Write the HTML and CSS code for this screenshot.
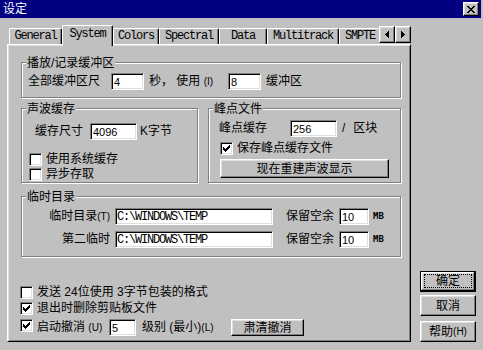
FILE: index.html
```html
<!DOCTYPE html>
<html lang="zh-CN">
<head>
<meta charset="utf-8">
<title>设定</title>
<link rel="stylesheet" href="styles.css">
</head>
<body>
<div class="window">
  <div class="titlebar">
    <span class="title">设定</span>
    <span class="close-btn"><svg width="8" height="7" viewBox="0 0 8 7"><path fill="#000" d="M0 0h2v1H0zM6 0h2v1H6zM1 1h2v1H1zM5 1h2v1H5zM2 2h4v1H2zM3 3h2v1H3zM2 4h4v1H2zM1 5h2v1H1zM5 5h2v1H5zM0 6h2v1H0zM6 6h2v1H6z"/></svg></span>
  </div>
  <div class="client">
    <div class="tabctl">
      <div class="tabstrip">
        <div class="tab w-general">General</div>
        <div class="tab active w-system">System</div>
        <div class="tab w-colors">Colors</div>
        <div class="tab w-spectral">Spectral</div>
        <div class="tab w-data">Data</div>
        <div class="tab w-multi">Multitrack</div>
        <div class="tab w-smpte">SMPTE</div>
        <div class="scroll-btn"><svg width="4" height="7" viewBox="0 0 4 7"><path fill="#000" d="M3 0h1v7H3zM2 1h1v5H2zM1 2h1v3H1zM0 3h1v1H0z"/></svg></div>
        <div class="scroll-btn"><svg width="4" height="7" viewBox="0 0 4 7"><path fill="#000" d="M0 0h1v7H0zM1 1h1v5H1zM2 2h1v3H2zM3 3h1v1H3z"/></svg></div>
      </div>
      <div class="panel">
        <div class="group g-buffer">
          <div class="gtitle">播放/记录缓冲区</div>
          <div class="row r-buffer">
            <span class="lbl w83">全部缓冲区尺</span>
            <input class="field w33" type="text" value="4">
            <span class="lbl w79 ml5">秒， 使用 <span class="small">(I)</span></span>
            <input class="field w33" type="text" value="8">
            <span class="lbl ml5">缓冲区</span>
          </div>
        </div>

        <div class="grow">
          <div class="group g-wave">
            <div class="gtitle">声波缓存</div>
            <div class="row r-cache">
              <span class="lbl w55">缓存尺寸</span>
              <input class="field w47" type="text" value="4096">
              <span class="lbl ml3">K字节</span>
            </div>
            <div class="chk-row c-wave1">
              <span class="chk"></span><span class="chk-text">使用系统缓存</span>
            </div>
            <div class="chk-row c-wave2">
              <span class="chk"></span><span class="chk-text">异步存取</span>
            </div>
          </div>
          <div class="group g-peak">
            <div class="gtitle">峰点文件</div>
            <div class="row r-peak">
              <span class="lbl w71">峰点缓存</span>
              <input class="field w47" type="text" value="256">
              <span class="lbl slash">/</span>
              <span class="lbl ml8">区块</span>
            </div>
            <div class="chk-row c-peak">
              <span class="chk"><svg width="9" height="9" viewBox="0 0 9 9"><path fill="#000" d="M7 1h1v1H7zM6 2h2v1H6zM1 3h1v1H1zM5 3h3v1H5zM1 4h2v1H1zM4 4h3v1H4zM1 5h5v1H1zM2 6h3v1H2zM3 7h1v1H3z"/></svg></span><span class="chk-text">保存峰点缓存文件</span>
            </div>
            <div class="btn btn-rebuild">现在重建声波显示</div>
          </div>
        </div>

        <div class="group g-temp">
          <div class="gtitle">临时目录</div>
          <div class="row r-temp1">
            <span class="lbl tlabel">临时目录<span class="small">(T)</span></span>
            <input class="field mono w158" type="text" value="C:\WINDOWS\TEMP">
            <span class="lbl keep">保留空余</span>
            <input class="field w30 ml5" type="text" value="10">
            <span class="unit">MB</span>
          </div>
          <div class="row r-temp2">
            <span class="lbl tlabel">第二临时</span>
            <input class="field mono w158" type="text" value="C:\WINDOWS\TEMP">
            <span class="lbl keep">保留空余</span>
            <input class="field w30 ml5" type="text" value="10">
            <span class="unit">MB</span>
          </div>
        </div>

        <div class="chk-row b1">
          <span class="chk"></span><span class="chk-text">发送 24位使用 3字节包装的格式</span>
        </div>
        <div class="chk-row b2">
          <span class="chk"><svg width="9" height="9" viewBox="0 0 9 9"><path fill="#000" d="M7 1h1v1H7zM6 2h2v1H6zM1 3h1v1H1zM5 3h3v1H5zM1 4h2v1H1zM4 4h3v1H4zM1 5h5v1H1zM2 6h3v1H2zM3 7h1v1H3z"/></svg></span><span class="chk-text">退出时删除剪贴板文件</span>
        </div>
        <div class="chk-row b3">
          <span class="chk"><svg width="9" height="9" viewBox="0 0 9 9"><path fill="#000" d="M7 1h1v1H7zM6 2h2v1H6zM1 3h1v1H1zM5 3h3v1H5zM1 4h2v1H1zM4 4h3v1H4zM1 5h5v1H1zM2 6h3v1H2zM3 7h1v1H3z"/></svg></span>
          <span class="chk-text w72">启动撤消 <span class="small">(U)</span></span>
          <input class="field w27" type="text" value="5">
          <span class="lbl w89 ml6">级别 (最小)<span class="small">(L)</span></span>
          <div class="btn btn-purge">肃清撤消</div>
        </div>
      </div>
    </div>
    <div class="side">
      <div class="btn default"><span class="focus">确定</span></div>
      <div class="btn btn-cancel">取消</div>
      <div class="btn btn-help">帮助 <span class="small">(H)</span></div>
    </div>
  </div>
</div>
</body>
</html>
```

FILE: styles.css
```css
* { box-sizing: border-box; }
html, body { margin: 0; padding: 0; }
body {
  width: 483px;
  height: 350px;
  overflow: hidden;
  background: #c0c0c0;
  font-family: "Liberation Sans", "Noto Sans CJK SC", sans-serif;
  font-size: 12px;
  color: #000;
}

.titlebar {
  width: 481px;
  height: 18px;
  background: #000080;
  display: flex;
  align-items: center;
  justify-content: space-between;
  padding: 0 2px 0 3px;
}
.title { color: #fff; font-size: 12px; line-height: 14px; }
.close-btn {
  width: 16px;
  height: 14px;
  background: #c0c0c0;
  border: 1px solid;
  border-color: #fff #000 #000 #fff;
  box-shadow: inset -1px -1px #808080, inset 1px 1px #dfdfdf;
  display: flex;
  align-items: center;
  justify-content: center;
}
.close-btn svg { display: block; }

.client { display: flex; align-items: flex-start; }
.tabctl { margin: 7px 0 0 7px; width: 404px; flex: none; }

.tabstrip {
  display: flex;
  align-items: flex-end;
  height: 19px;
  padding-left: 2px;
}
.tab {
  flex: none;
  height: 16px;
  border-top: 1px solid #fff;
  border-left: 1px solid #fff;
  border-right: 1px solid #000;
  border-radius: 2px 2px 0 0;
  box-shadow: inset -1px 0 #808080;
  background: #c0c0c0;
  font-family: "Liberation Mono", monospace;
  font-size: 12px;
  letter-spacing: -1.2px;
  line-height: 14px;
  text-align: center;
  white-space: nowrap;
  overflow: hidden;
}
.tab.active {
  height: 21px;
  margin-bottom: -2px;
  padding-top: 1px;
  position: relative;
  z-index: 1;
}
.w-general { width: 53px; }
.w-system { width: 51px; }
.w-colors { width: 46px; }
.w-spectral { width: 60px; }
.w-data { width: 48px; }
.w-multi { width: 72px; }
.w-smpte { width: 40px; border-right: none; box-shadow: none; text-align: left; padding-left: 5px; }

.scroll-btn {
  flex: none;
  align-self: flex-start;
  margin-top: 1px;
  width: 16px;
  height: 17px;
  background: #c0c0c0;
  border: 1px solid;
  border-color: #fff #000 #000 #fff;
  box-shadow: inset -1px -1px #808080, inset 1px 1px #dfdfdf;
  display: flex;
  align-items: center;
  justify-content: center;
}
.scroll-btn svg { display: block; }

.panel {
  width: 404px;
  height: 298px;
  border: 1px solid;
  border-color: #fff #000 #000 #fff;
  box-shadow: inset 1px 1px #dfdfdf, inset -1px -1px #808080;
}

.group {
  border: 1px solid #808080;
  box-shadow: inset 1px 1px #fff, 1px 1px #fff;
}
.gtitle {
  width: fit-content;
  margin: -6px 0 0 4px;
  padding: 0 1px;
  height: 12px;
  line-height: 12px;
  background: #c0c0c0;
  white-space: nowrap;
}

.row {
  display: flex;
  align-items: center;
  height: 17px;
  line-height: 17px;
  white-space: nowrap;
}
.lbl { flex: none; }
.small { font-size: 10px; }

.field {
  flex: none;
  height: 17px;
  margin: 0;
  padding: 0 0 0 2px;
  border: 1px solid;
  border-color: #808080 #fff #fff #808080;
  box-shadow: inset 1px 1px #000, inset -1px -1px #dfdfdf;
  background: #fff;
  color: #000;
  font-family: "Liberation Sans", sans-serif;
  font-size: 11px;
  outline: none;
}
.field.mono {
  font-family: "Liberation Mono", monospace;
  font-size: 12px;
  letter-spacing: -1.2px;
  padding-left: 1px;
}

.w27 { width: 27px; }
.w30 { width: 30px; }
.w33 { width: 33px; }
.w47 { width: 47px; }
.w55 { width: 55px; }
.w71 { width: 71px; }
.w72 { width: 72px; }
.w79 { width: 79px; }
.w83 { width: 83px; }
.w89 { width: 89px; }
.w158 { width: 158px; }
.ml3 { margin-left: 3px; }
.ml5 { margin-left: 5px; }
.ml6 { margin-left: 6px; }
.ml8 { margin-left: 8px; }

.g-buffer { margin: 17px 0 0 13px; width: 380px; height: 36px; }
.r-buffer { margin-top: 4px; padding-left: 6px; }

.grow {
  display: flex;
  gap: 10px;
  margin: 10px 0 0 13px;
  width: 380px;
  height: 75px;
}
.g-wave { width: 177px; flex: none; }
.g-peak { width: 193px; flex: none; }
.r-cache { margin-top: 8px; padding-left: 13px; }
.r-peak { margin-top: 5px; padding-left: 10px; }
.slash { margin-left: 5px; }

.chk-row {
  display: flex;
  align-items: center;
  height: 15px;
  line-height: 13px;
  white-space: nowrap;
}
.chk {
  flex: none;
  width: 13px;
  height: 13px;
  padding: 1px;
  border: 1px solid;
  border-color: #808080 #fff #fff #808080;
  box-shadow: inset 1px 1px #000, inset -1px -1px #dfdfdf;
  background: #fff;
}
.chk svg { display: block; }
.chk-text { margin-left: 4px; flex: none; line-height: 13px; }

.c-wave1 { margin-top: 12px; padding-left: 7px; }
.c-wave2 { padding-left: 7px; }
.c-peak { margin-top: 4px; padding-left: 11px; }

.btn {
  flex: none;
  background: #c0c0c0;
  border: 1px solid;
  border-color: #fff #000 #000 #fff;
  box-shadow: inset -1px -1px #808080, inset 1px 1px #dfdfdf;
  display: flex;
  align-items: center;
  justify-content: center;
  white-space: nowrap;
  line-height: 12px;
}
.btn-rebuild { margin: 3px 0 0 11px; width: 169px; height: 19px; }

.g-temp { margin: 13px 0 0 13px; width: 380px; height: 61px; }
.r-temp1 { margin-top: 5px; }
.r-temp2 { margin-top: 6px; }
.tlabel { width: 93px; padding-right: 5px; text-align: right; }
.keep { margin-left: 13px; width: 48px; }
.unit {
  margin-left: 4px;
  font-family: "DejaVu Sans Mono", monospace;
  font-weight: bold;
  font-size: 9px;
}

.b1 { margin-top: 28px; padding-left: 12px; }
.b2 { margin-top: 1px; padding-left: 12px; }
.b3 {
  margin-top: 3px;
  padding-left: 12px;
  height: 17px;
  align-items: flex-start;
}
.b3 .chk-text, .b3 .lbl { line-height: 17px; }
.btn-purge { width: 73px; height: 17px; }

.side {
  flex: none;
  margin: 253px 0 0 9px;
  display: flex;
  flex-direction: column;
  width: 56px;
}
.side .btn { width: 56px; height: 21px; }
.btn.default {
  border: 1px solid #000;
  box-shadow: inset -1px -1px #000, inset 1px 1px #fff, inset -2px -2px #808080, inset 2px 2px #dfdfdf;
  padding: 2px 3px 3px 3px;
  align-items: stretch;
  justify-content: stretch;
}
.focus {
  flex: 1;
  border: 1px dotted #000;
  display: flex;
  align-items: center;
  justify-content: center;
}
.btn-cancel { margin-top: 3px; }
.btn-help { margin-top: 5px; }
```
